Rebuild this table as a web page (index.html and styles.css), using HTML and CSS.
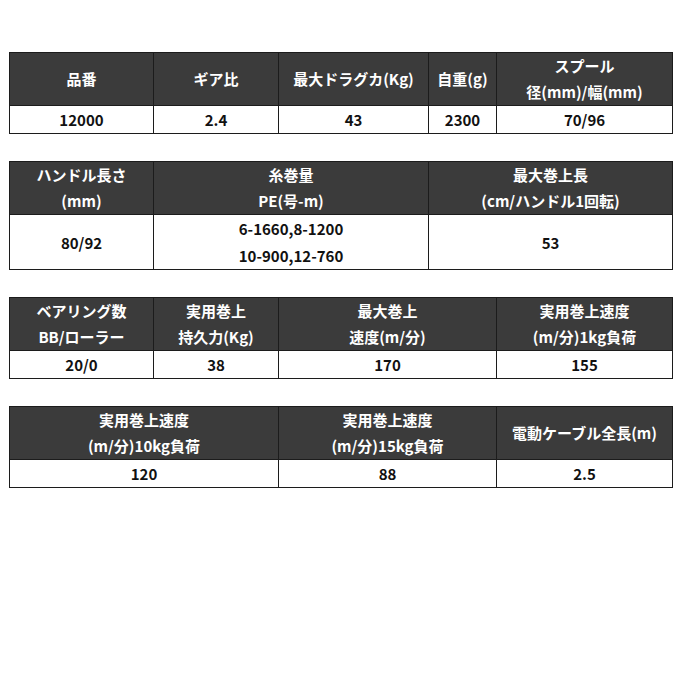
FILE: index.html
```html
<!DOCTYPE html>
<html lang="ja">
<head>
<meta charset="utf-8">
<link rel="stylesheet" href="styles.css">
</head>
<body>
<div class="page">
  <table class="spec">
    <colgroup><col style="width:144px"><col style="width:125px"><col style="width:150px"><col style="width:68px"><col style="width:176px"></colgroup>
    <tr><th>品番</th><th>ギア比</th><th>最大ドラグカ(Kg)</th><th>自重(g)</th><th>スプール<br>径(mm)/幅(mm)</th></tr>
    <tr><td>12000</td><td>2.4</td><td>43</td><td>2300</td><td>70/96</td></tr>
  </table>

  <table class="spec">
    <colgroup><col style="width:144px"><col style="width:275px"><col style="width:244px"></colgroup>
    <tr><th>ハンドル長さ<br>(mm)</th><th>糸巻量<br>PE(号-m)</th><th>最大巻上長<br>(cm/ハンドル1回転)</th></tr>
    <tr><td>80/92</td><td>6-1660,8-1200<br>10-900,12-760</td><td>53</td></tr>
  </table>

  <table class="spec">
    <colgroup><col style="width:144px"><col style="width:125px"><col style="width:218px"><col style="width:176px"></colgroup>
    <tr><th>ベアリング数<br>BB/ローラー</th><th>実用巻上<br>持久力(Kg)</th><th>最大巻上<br>速度(m/分)</th><th>実用巻上速度<br>(m/分)1kg負荷</th></tr>
    <tr><td>20/0</td><td>38</td><td>170</td><td>155</td></tr>
  </table>

  <table class="spec">
    <colgroup><col style="width:269px"><col style="width:218px"><col style="width:176px"></colgroup>
    <tr><th>実用巻上速度<br>(m/分)10kg負荷</th><th>実用巻上速度<br>(m/分)15kg負荷</th><th>電動ケーブル全長(m)</th></tr>
    <tr><td>120</td><td>88</td><td>2.5</td></tr>
  </table>
</div>
</body>
</html>
```

FILE: styles.css
```css
html, body {
  margin: 0;
  padding: 0;
  background: #ffffff;
}
.page {
  display: flex;
  flex-direction: column;
  gap: 27px;
  padding: 52px 0 0 9px;
  font-family: "Noto Sans CJK JP", "Noto Sans", sans-serif;
}
.spec {
  width: 663px;
  table-layout: fixed;
  border-collapse: collapse;
  border: 1.5px solid #1c1c1c;
}
.spec th,
.spec td {
  border: 1.5px solid #1c1c1c;
  padding: 0;
  text-align: center;
  vertical-align: middle;
  font-size: 15px;
  font-weight: 700;
  white-space: nowrap;
}
.spec th {
  background: #3b3b3b;
  color: #ffffff;
  line-height: 26px;
  height: 52px;
}
.spec td {
  color: #111111;
  line-height: 27px;
  height: 27px;
}
```
